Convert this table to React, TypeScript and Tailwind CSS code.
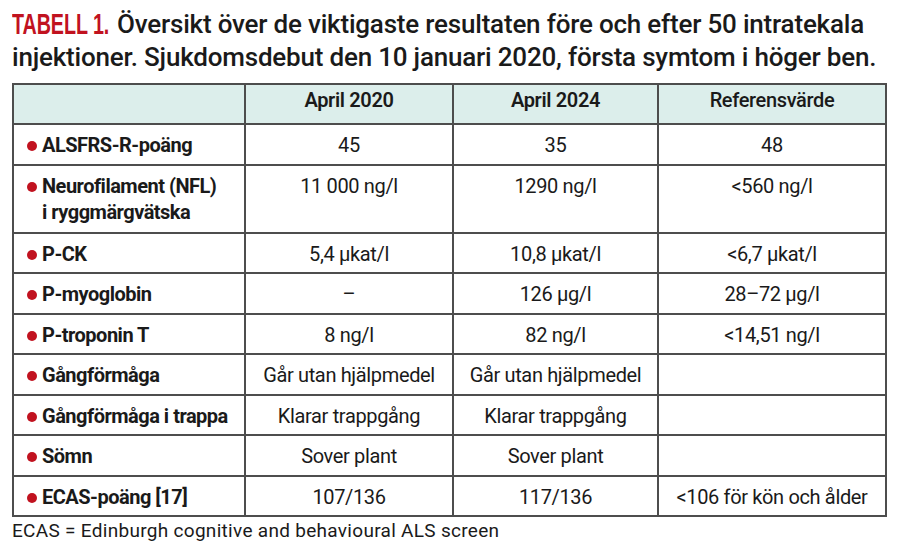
import React from 'react';

type Row = {
  label: string[];
  a: string;
  b: string;
  ref: string;
  tall?: boolean;
};

const rows: Row[] = [
  { label: ['ALSFRS-R-poäng'], a: '45', b: '35', ref: '48' },
  { label: ['Neurofilament (NFL)', 'i ryggmärgvätska'], a: '11 000 ng/l', b: '1290 ng/l', ref: '<560 ng/l', tall: true },
  { label: ['P-CK'], a: '5,4 µkat/l', b: '10,8 µkat/l', ref: '<6,7 µkat/l' },
  { label: ['P-myoglobin'], a: '–', b: '126 µg/l', ref: '28–72 µg/l' },
  { label: ['P-troponin T'], a: '8 ng/l', b: '82 ng/l', ref: '<14,51 ng/l' },
  { label: ['Gångförmåga'], a: 'Går utan hjälpmedel', b: 'Går utan hjälpmedel', ref: '' },
  { label: ['Gångförmåga i trappa'], a: 'Klarar trappgång', b: 'Klarar trappgång', ref: '' },
  { label: ['Sömn'], a: 'Sover plant', b: 'Sover plant', ref: '' },
  { label: ['ECAS-poäng [17]'], a: '107/136', b: '117/136', ref: '<106 för kön och ålder' },
];

const cell = 'border-2 border-[#4d4d4d] text-center align-top';

export default function App() {
  return (
    <div className="w-[900px] h-[552px] bg-white text-[#1a1a1a] px-3 pt-[8px] font-['Roboto',sans-serif]">
      <h1 className="text-[26px] leading-[33px] font-medium tracking-[-0.2px]">
        {/* condensed label: no narrow face installed, so squeeze it */}
        <span className="inline-block w-[98px] h-[33px] mr-[7px] align-top overflow-hidden whitespace-nowrap">
          <span className="block origin-left scale-x-[0.68] font-['Liberation_Sans',sans-serif] font-bold text-[#c1121f] text-[29px] leading-[33px] tracking-[-0.1px]">
            TABELL 1.
          </span>
        </span>
        Översikt över de viktigaste resultaten före och efter 50 intratekala injektioner. Sjukdomsdebut den 10 januari
        2020, första symtom i höger ben.
      </h1>

      <table className="mt-[9px] border-collapse table-fixed w-[873px] text-[20px] tracking-[-0.35px]">
        <colgroup>
          <col className="w-[232px]" />
          <col className="w-[208px]" />
          <col className="w-[205px]" />
          <col className="w-[228px]" />
        </colgroup>
        <thead>
          <tr className="bg-[#dceeeb] h-[40px]">
            <th className={`${cell} align-middle`}></th>
            <th className={`${cell} align-middle font-semibold`}>April 2020</th>
            <th className={`${cell} align-middle font-semibold`}>April 2024</th>
            <th className={`${cell} align-middle font-medium`}>Referensvärde</th>
          </tr>
        </thead>
        <tbody>
          {rows.map((r) => (
            <tr key={r.label[0]} className={r.tall ? 'h-[68px]' : 'h-[40.5px]'}>
              <td className="border-2 border-[#4d4d4d] align-top pl-[13px] pt-[7px] leading-[26px]">
                <div className="flex gap-[5px]">
                  <span className="mt-[9px] w-[10px] h-[10px] rounded-full bg-[#c1121f] shrink-0" />
                  <div className="font-bold tracking-[-0.5px]">
                    {r.label.map((l) => (
                      <div key={l}>{l}</div>
                    ))}
                  </div>
                </div>
              </td>
              <td className={`${cell} pt-[7px] leading-[26px]`}>{r.a}</td>
              <td className={`${cell} pt-[7px] leading-[26px]`}>{r.b}</td>
              <td className={`${cell} pt-[7px] leading-[26px]`}>{r.ref}</td>
            </tr>
          ))}
        </tbody>
      </table>

      <p className="mt-[2px] text-[19px] leading-[24px] tracking-[0.3px]">
        ECAS = Edinburgh cognitive and behavioural ALS screen
      </p>
    </div>
  );
}
